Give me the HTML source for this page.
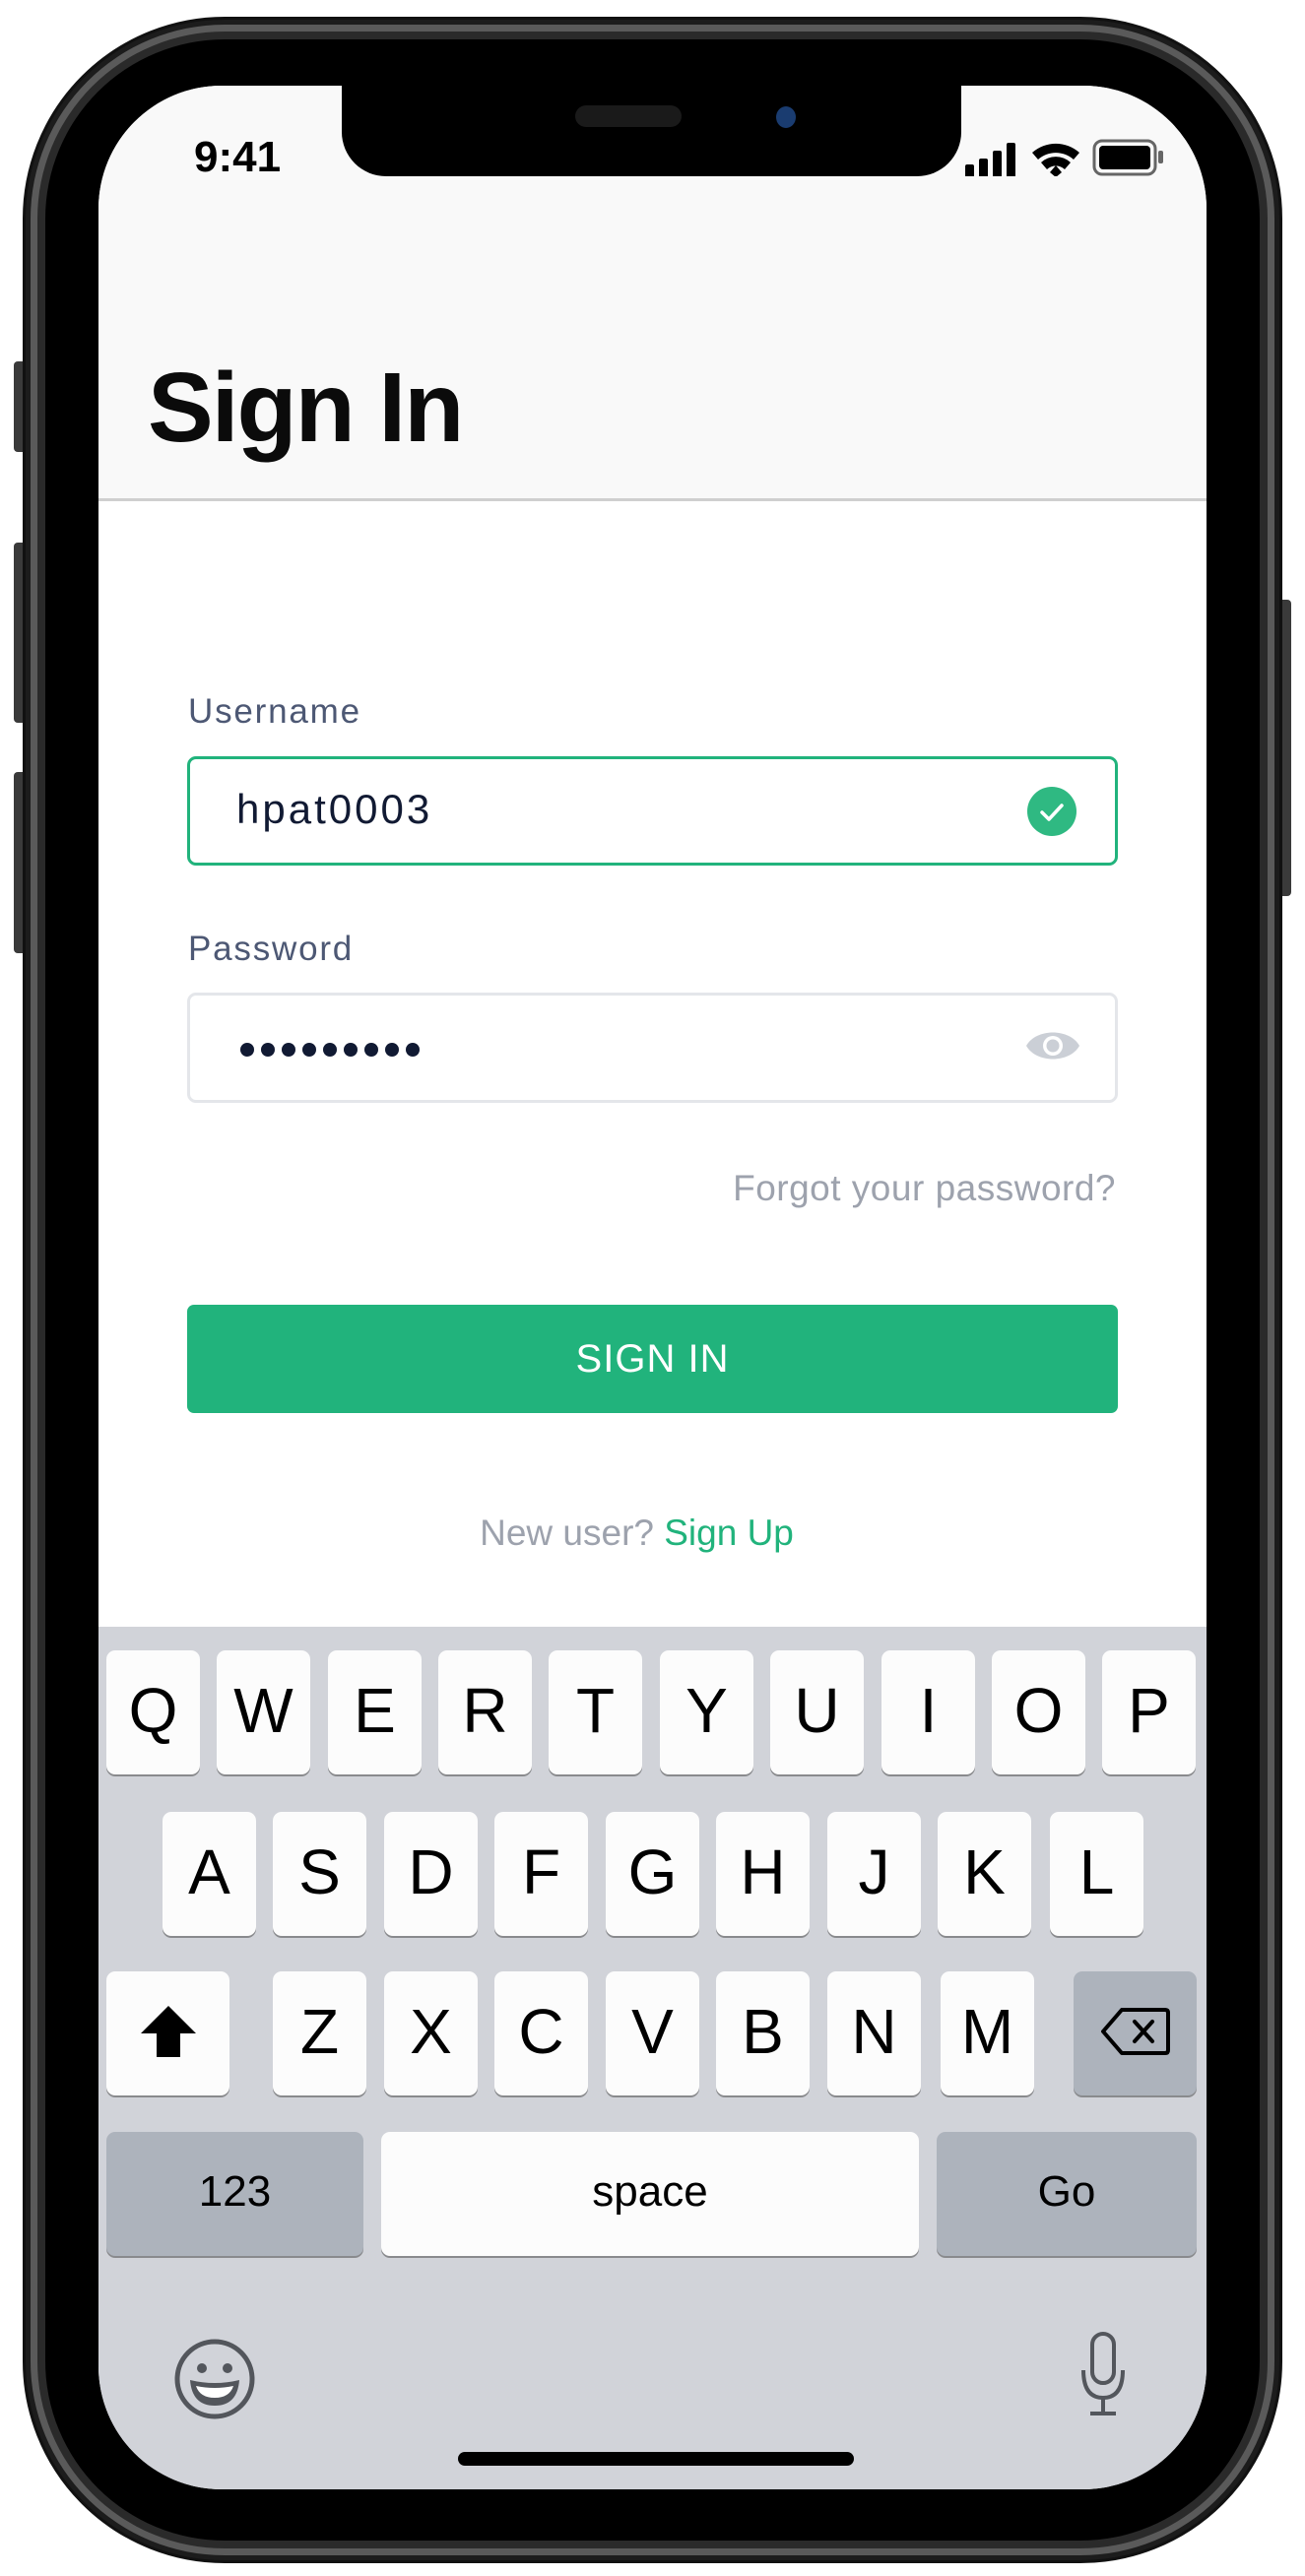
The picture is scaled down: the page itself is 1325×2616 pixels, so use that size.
<!DOCTYPE html>
<html><head><meta charset="utf-8">
<style>
*{margin:0;padding:0;box-sizing:border-box}
body{width:1325px;height:2616px;background:#fff;position:relative;overflow:hidden;font-family:"Liberation Sans",sans-serif}
.a{position:absolute}
.key{position:absolute;background:#fcfcfc;border-radius:9px;box-shadow:0 2px 0 #898a8d;display:flex;align-items:center;justify-content:center;font-size:64px;color:#000;padding-bottom:4px;width:95px;height:126px}
.g{background:#adb3bc}
.r1{top:1589px}.r2{top:1753px}.r3{top:1915px}.r4{top:2078px}
</style></head><body>
<div class="a" style="left:14px;top:367px;width:14px;height:92px;background:#3a3a3a;border-radius:4px"></div>
<div class="a" style="left:14px;top:551px;width:14px;height:183px;background:#3a3a3a;border-radius:4px"></div>
<div class="a" style="left:14px;top:784px;width:14px;height:184px;background:#3a3a3a;border-radius:4px"></div>
<div class="a" style="left:1297px;top:609px;width:14px;height:301px;background:#3a3a3a;border-radius:4px"></div>
<div class="a" style="left:23px;top:17px;width:1279px;height:2586px;border-radius:205px;background:#1c1c1c;border:3px solid #111"></div>
<div class="a" style="left:31px;top:25px;width:1263px;height:2570px;border-radius:197px;background:#5a5a5a"></div>
<div class="a" style="left:38px;top:32px;width:1249px;height:2556px;border-radius:190px;background:#2a2a2a"></div>
<div class="a" style="left:46px;top:40px;width:1233px;height:2540px;border-radius:182px;background:#000"></div>
<div class="a" style="left:100px;top:87px;width:1125px;height:2441px;border-radius:125px;overflow:hidden;background:#fff">
  <div class="a" style="left:0;top:0;width:1125px;height:422px;background:#f9f9f9;border-bottom:3px solid #cfcfcf"></div>
  <div class="a" style="left:50px;top:270px;font-size:100px;font-weight:bold;color:#0b0b0b;letter-spacing:-2px">Sign In</div>
  <div class="a" style="left:97px;top:48px;font-size:44px;font-weight:bold;color:#000">9:41</div>
  <div class="a" style="left:247px;top:0;width:629px;height:92px;background:#000;border-radius:0 0 45px 45px"></div>
  <div class="a" style="left:484px;top:20px;width:108px;height:22px;background:#1a1a1a;border-radius:11px"></div>
  <div class="a" style="left:688px;top:21px;width:20px;height:22px;background:#1a3c70;border-radius:50%"></div>
  <svg class="a" style="left:878px;top:50px" width="230" height="42" viewBox="878 50 230 42">
    <rect x="880" y="80" width="9" height="14" rx="2"/>
    <rect x="894" y="74" width="9" height="20" rx="2"/>
    <rect x="908" y="66" width="9" height="28" rx="2"/>
    <rect x="922" y="58" width="9" height="36" rx="2"/>
    <path d="M948 68 A36 36 0 0 1 996 68 L990 75 A27 27 0 0 0 954 75Z"/>
    <path d="M957 78 A22 22 0 0 1 987 78 L981 85 A13 13 0 0 0 963 85Z"/>
    <path d="M966 88 L972 81 L978 88 L972 93Z"/>
    <rect x="1011" y="56" width="62" height="34" rx="8" fill="none" stroke="#666" stroke-width="3"/>
    <rect x="1016" y="61" width="52" height="24" rx="4"/>
    <rect x="1076" y="66" width="5" height="13" rx="2" fill="#666"/>
  </svg>
  <div class="a" style="left:91px;top:616px;font-size:35px;color:#4d5874;letter-spacing:1.8px">Username</div>
  <div class="a" style="left:90px;top:681px;width:945px;height:111px;border:3px solid #21b37c;border-radius:9px;background:#fff"></div>
  <div class="a" style="left:140px;top:711px;font-size:42px;color:#111a33;letter-spacing:3px">hpat0003</div>
  <svg class="a" style="left:943px;top:712px" width="50" height="50" viewBox="0 0 50 50"><circle cx="25" cy="25" r="25" fill="#2fb982"/><path d="M15 26 L22 33 L35 19" fill="none" stroke="#fff" stroke-width="3.5" stroke-linecap="round" stroke-linejoin="round"/></svg>
  <div class="a" style="left:91px;top:857px;font-size:35px;color:#4d5874;letter-spacing:1.8px">Password</div>
  <div class="a" style="left:90px;top:921px;width:945px;height:112px;border:3px solid #e4e6ea;border-radius:9px;background:#fff"></div>
  <svg class="a" style="left:140px;top:968px" width="200" height="22" viewBox="0 0 200 22">
    <g fill="#111a33"><circle cx="11" cy="11" r="7"/><circle cx="32" cy="11" r="7"/><circle cx="53" cy="11" r="7"/><circle cx="74" cy="11" r="7"/><circle cx="95" cy="11" r="7"/><circle cx="116" cy="11" r="7"/><circle cx="137" cy="11" r="7"/><circle cx="158" cy="11" r="7"/><circle cx="179" cy="11" r="7"/></g>
  </svg>
  <svg class="a" style="left:940px;top:955px" width="58" height="40" viewBox="0 0 58 40"><path d="M2 20 C12 2 46 2 56 20 C46 38 12 38 2 20Z" fill="#cbcfd6"/><circle cx="29" cy="20" r="10" fill="#fff"/><circle cx="29" cy="20" r="6.5" fill="#cbcfd6"/></svg>
  <div class="a" style="right:92px;top:1099px;font-size:37px;color:#9da2ad;letter-spacing:0.5px">Forgot your password?</div>
  <div class="a" style="left:90px;top:1238px;width:945px;height:110px;background:#21b37c;border-radius:7px;display:flex;align-items:center;justify-content:center;color:#fff;font-size:40px;letter-spacing:1px">SIGN IN</div>
  <div class="a" style="left:0;top:1449px;width:1125px;text-align:center;font-size:37px;color:#9da2ad;padding-right:32px">New user? <span style="color:#21b37c">Sign Up</span></div>
  <div class="a" style="left:0;top:1565px;width:1125px;height:876px;background:#d1d3d9"></div>
  <div class="key r1" style="left:8px">Q</div>
  <div class="key r1" style="left:120px">W</div>
  <div class="key r1" style="left:233px">E</div>
  <div class="key r1" style="left:345px">R</div>
  <div class="key r1" style="left:457px">T</div>
  <div class="key r1" style="left:570px">Y</div>
  <div class="key r1" style="left:682px">U</div>
  <div class="key r1" style="left:795px">I</div>
  <div class="key r1" style="left:907px">O</div>
  <div class="key r1" style="left:1019px">P</div>
  <div class="key r2" style="left:65px">A</div>
  <div class="key r2" style="left:177px">S</div>
  <div class="key r2" style="left:290px">D</div>
  <div class="key r2" style="left:402px">F</div>
  <div class="key r2" style="left:515px">G</div>
  <div class="key r2" style="left:627px">H</div>
  <div class="key r2" style="left:740px">J</div>
  <div class="key r2" style="left:852px">K</div>
  <div class="key r2" style="left:966px">L</div>
  <div class="key r3" style="left:8px;width:125px"><svg width="60" height="56" viewBox="0 0 60 56"><path d="M30 2 L58 30 L42 30 L42 54 L18 54 L18 30 L2 30Z" fill="#000"/></svg></div>
  <div class="key r3" style="left:177px">Z</div>
  <div class="key r3" style="left:290px">X</div>
  <div class="key r3" style="left:402px">C</div>
  <div class="key r3" style="left:515px">V</div>
  <div class="key r3" style="left:627px">B</div>
  <div class="key r3" style="left:740px">N</div>
  <div class="key r3" style="left:855px">M</div>
  <div class="key g r3" style="left:990px;width:125px"><svg width="72" height="50" viewBox="0 0 72 50"><path d="M22 3 L66 3 Q69 3 69 6 L69 44 Q69 47 66 47 L22 47 L3 25Z" fill="none" stroke="#000" stroke-width="4" stroke-linejoin="round"/><path d="M35 15 L53 35 M53 15 L35 35" stroke="#000" stroke-width="4" stroke-linecap="round"/></svg></div>
  <div class="key g r4" style="left:8px;width:261px;font-size:44px">123</div>
  <div class="key r4" style="left:287px;width:546px;font-size:44px">space</div>
  <div class="key g r4" style="left:851px;width:264px;font-size:44px">Go</div>
  <svg class="a" style="left:75px;top:2286px" width="86" height="86" viewBox="0 0 86 86"><circle cx="43" cy="43" r="38" fill="none" stroke="#53565c" stroke-width="5"/><circle cx="30" cy="32" r="5" fill="#53565c"/><circle cx="56" cy="32" r="5" fill="#53565c"/><path d="M18 44 Q43 50 68 44 Q66 70 43 70 Q20 70 18 44Z" fill="#53565c"/><path d="M24 50 Q43 54 62 50 Q58 62 43 62 Q28 62 24 50Z" fill="#fff"/></svg>
  <svg class="a" style="left:995px;top:2280px" width="50" height="90" viewBox="0 0 50 90"><rect x="14" y="3" width="22" height="50" rx="11" fill="none" stroke="#53565c" stroke-width="4"/><path d="M5 40 Q5 68 25 68 Q45 68 45 40" fill="none" stroke="#53565c" stroke-width="4"/><path d="M25 68 L25 84 M12 84 L38 84" stroke="#53565c" stroke-width="4"/></svg>
  <div class="a" style="left:365px;top:2403px;width:402px;height:14px;border-radius:7px;background:#000"></div>
</div>
</body></html>
